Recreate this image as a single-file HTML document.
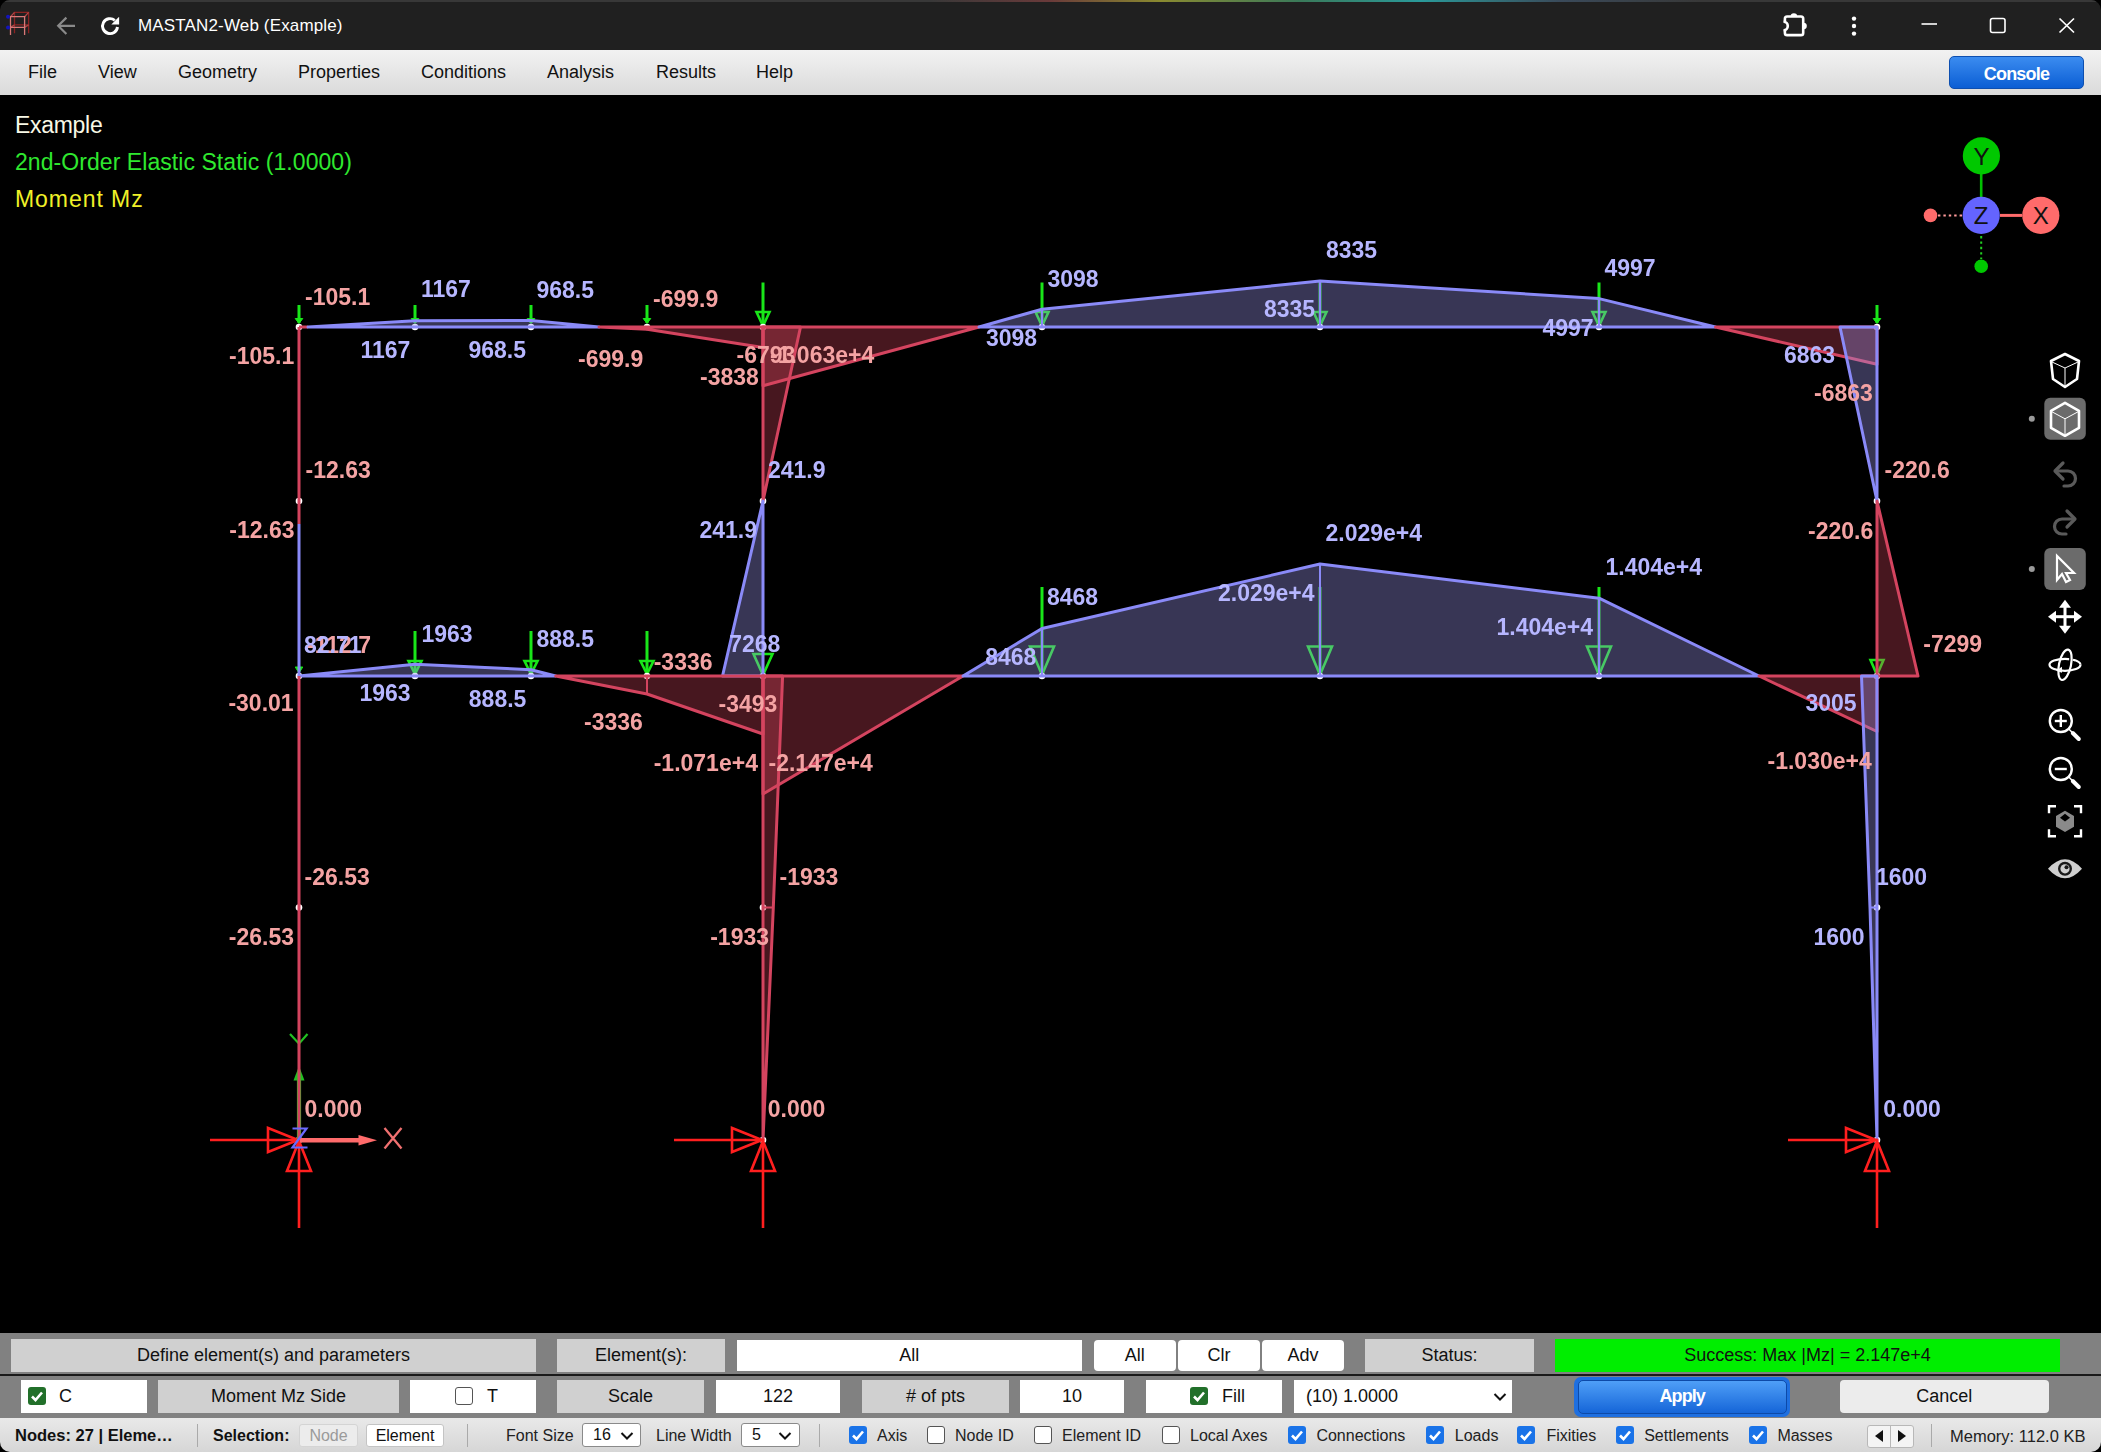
<!DOCTYPE html><html><head><meta charset="utf-8"><style>

*{box-sizing:border-box;margin:0;padding:0}
html,body{width:2101px;height:1452px;overflow:hidden;background:#000;font-family:"Liberation Sans",sans-serif}
.a{position:absolute}
#win{position:absolute;left:0;top:0;width:2101px;height:1452px;background:#000;border-radius:10px;overflow:hidden}
#tb{position:absolute;left:0;top:0;width:2101px;height:50px;background:#202020}
#tb .t{position:absolute;left:138px;top:17px;color:#fff;font-size:18px;line-height:18px;white-space:nowrap}
#mb{position:absolute;left:0;top:50px;width:2101px;height:45px;background:linear-gradient(#f2f2f2,#dadada)}
#mb span{position:absolute;top:13px;font-size:18px;line-height:18px;color:#111}
#console{position:absolute;left:1949px;top:6px;width:135px;height:33px;border-radius:5px;background:linear-gradient(#3b8cf0,#0b5ed4);border:1px solid #0d4fb0;color:#fff;font-size:18px;letter-spacing:-0.8px;font-weight:bold;text-align:center;line-height:34px}
.ov{position:absolute;font-size:23px;line-height:23px;left:15px;white-space:nowrap}
#bp{position:absolute;left:0;top:1333px;width:2101px;height:85px;background:#818181}
#sb{position:absolute;left:0;top:1418px;width:2101px;height:34px;background:linear-gradient(#e9e9e9,#d6d6d6)}
.bx{position:absolute;background:#d0d0d0;font-size:18px;color:#111;text-align:center;white-space:nowrap}
.r1{top:1339px;height:33px;line-height:33px}
.r2{top:1380px;height:33px;line-height:33px}
.wh{background:#fff}
.btn{background:#fff;border-radius:4px;border:1px solid #c8c8c8}
.s{position:absolute;font-size:16px;line-height:16px;color:#222;white-space:nowrap;top:1427px}
.cb{position:absolute;top:1426px;width:18px;height:18px;border-radius:3px}
.cb.on{background:#1a73e8}
.cb.off{background:#fff;border:1.5px solid #555}
.sep{position:absolute;top:1424px;width:1px;height:23px;background:#aaa}
.sel{position:absolute;top:1423px;height:24px;background:#fff;border:1px solid #8a8a8a;border-radius:3px;font-size:16px;line-height:22px;padding-left:10px;color:#111}

</style></head><body><div id="win">
<div id="tb">
<div class="a" style="left:0;top:0;width:2101px;height:2px;background:linear-gradient(90deg,#383838 0px,#383838 930px,#6a3a3a 1050px,#8a8a30 1160px,#3a7a5a 1300px,#2a9a9a 1420px,#3a4a5a 1560px,#383838 1700px,#383838 2101px)"></div>
<svg class="a" style="left:0;top:0" width="200" height="50"><g fill="none" stroke-width="1.3"><path d="M14.5,33.3 L14.5,12.4 L28.6,12.4 L28.6,33.3 M14.5,24.9 L28.6,24.9" stroke="#8a2222"/><path d="M10.5,16.7 L14.5,12.4 M24.6,16.7 L28.6,12.4 M10.5,27.4 L14.5,24.9 M24.6,27.4 L28.6,24.9" stroke="#b04444"/><path d="M10.5,35 L10.5,16.7 L24.6,16.7 L24.6,35 M10.5,27.4 L24.6,27.4" stroke="#d87878"/></g><circle cx="8" cy="16.7" r="2" fill="#1414bb"/><circle cx="8" cy="27.4" r="2" fill="#1414bb"/><g stroke="#8a8a8a" stroke-width="2.2" fill="none" stroke-linecap="butt"><path d="M58,25.8 L75,25.8"/><path d="M66.4,17.6 L58.2,25.8 L66.4,34"/></g><path d="M117.5,27 A7.5,7.5 0 1 1 114.8,20.3" fill="none" stroke="#fff" stroke-width="2.9"/><polygon points="119.1,16.8 119.1,24.6 111.3,24.6" fill="#fff"/></svg>
<span class="t" style="font-size:17px;letter-spacing:0.15px">MASTAN2-Web (Example)</span>
<svg class="a" style="left:1760px;top:0" width="341" height="50"><rect x="24.9" y="16.5" width="18.3" height="18.6" rx="2.2" fill="none" stroke="#fff" stroke-width="2.6"/><path d="M30.6,16.5 A3.3,3.3 0 0 1 37.2,16.5 Z" fill="#fff"/><path d="M43.5,22.8 A3.3,3.3 0 0 1 43.5,29.4 Z" fill="#fff"/><rect x="22" y="22.5" width="4.5" height="7" fill="#202020"/><path d="M23.6,21.8 A4.2,4.2 0 0 1 23.6,30.2" fill="none" stroke="#fff" stroke-width="2.6"/><circle cx="94" cy="18.6" r="2.2" fill="#fff"/><circle cx="94" cy="26" r="2.2" fill="#fff"/><circle cx="94" cy="33.6" r="2.2" fill="#fff"/><line x1="161.5" y1="24" x2="177" y2="24" stroke="#fff" stroke-width="1.6"/><rect x="230.5" y="18.5" width="14.5" height="14" rx="2" fill="none" stroke="#fff" stroke-width="1.6"/><path d="M299.5,18.5 L314,32.5 M314,18.5 L299.5,32.5" stroke="#fff" stroke-width="1.7"/></svg>
</div>
<div id="mb">
<span style="left:28px">File</span>
<span style="left:98px">View</span>
<span style="left:178px">Geometry</span>
<span style="left:298px">Properties</span>
<span style="left:421px">Conditions</span>
<span style="left:547px">Analysis</span>
<span style="left:656px">Results</span>
<span style="left:756px">Help</span>
<div id="console">Console</div>
</div>
<div class="a" style="left:0;top:95px;width:2101px;height:1238px;background:#000"></div>
<svg class="a" style="left:0;top:0;filter:blur(0.45px)" width="2101" height="1452" viewBox="0 0 2101 1452">
<line x1="299" y1="305" x2="299" y2="323" stroke="#19e619" stroke-width="3"/><polygon points="295.2,318.5 302.8,318.5 299,323.5" fill="#19e619" stroke="#19e619" stroke-width="1"/>
<line x1="415" y1="305" x2="415" y2="323" stroke="#19e619" stroke-width="3"/><polygon points="411.2,318.5 418.8,318.5 415,323.5" fill="#19e619" stroke="#19e619" stroke-width="1"/>
<line x1="531" y1="305" x2="531" y2="323" stroke="#19e619" stroke-width="3"/><polygon points="527.2,318.5 534.8,318.5 531,323.5" fill="#19e619" stroke="#19e619" stroke-width="1"/>
<line x1="647" y1="305" x2="647" y2="323" stroke="#19e619" stroke-width="3"/><polygon points="643.2,318.5 650.8,318.5 647,323.5" fill="#19e619" stroke="#19e619" stroke-width="1"/>
<line x1="1877" y1="305" x2="1877" y2="323" stroke="#19e619" stroke-width="3"/><polygon points="1873.2,318.5 1880.8,318.5 1877,323.5" fill="#19e619" stroke="#19e619" stroke-width="1"/>
<line x1="763" y1="282.5" x2="763" y2="326" stroke="#19e619" stroke-width="3"/><polygon points="756.5,312 769.5,312 763,326" fill="none" stroke="#19e619" stroke-width="2.6" stroke-linejoin="miter"/>
<line x1="1042" y1="282.5" x2="1042" y2="326" stroke="#19e619" stroke-width="3"/><polygon points="1035.5,312 1048.5,312 1042,326" fill="none" stroke="#19e619" stroke-width="2.6" stroke-linejoin="miter"/>
<line x1="1320" y1="282.5" x2="1320" y2="326" stroke="#19e619" stroke-width="3"/><polygon points="1313.5,312 1326.5,312 1320,326" fill="none" stroke="#19e619" stroke-width="2.6" stroke-linejoin="miter"/>
<line x1="1599" y1="282.5" x2="1599" y2="326" stroke="#19e619" stroke-width="3"/><polygon points="1592.5,312 1605.5,312 1599,326" fill="none" stroke="#19e619" stroke-width="2.6" stroke-linejoin="miter"/>
<polygon points="295.2,667 302.8,667 299,673" fill="#19e619" stroke="#19e619" stroke-width="1"/>
<line x1="415" y1="631" x2="415" y2="674" stroke="#19e619" stroke-width="3"/><polygon points="408.5,661 421.5,661 415,674" fill="none" stroke="#19e619" stroke-width="2.6" stroke-linejoin="miter"/>
<line x1="531" y1="631" x2="531" y2="674" stroke="#19e619" stroke-width="3"/><polygon points="524.5,661 537.5,661 531,674" fill="none" stroke="#19e619" stroke-width="2.6" stroke-linejoin="miter"/>
<line x1="647" y1="631" x2="647" y2="674" stroke="#19e619" stroke-width="3"/><polygon points="640.5,661 653.5,661 647,674" fill="none" stroke="#19e619" stroke-width="2.6" stroke-linejoin="miter"/>
<polygon points="753.5,654 772.5,654 763,675" fill="none" stroke="#19e619" stroke-width="2.6" stroke-linejoin="miter"/>
<line x1="1042" y1="587" x2="1042" y2="675" stroke="#19e619" stroke-width="3"/><polygon points="1030,646.5 1054,646.5 1042,675" fill="none" stroke="#19e619" stroke-width="2.6" stroke-linejoin="miter"/>
<line x1="1320" y1="587" x2="1320" y2="675" stroke="#19e619" stroke-width="3"/><polygon points="1308,646.5 1332,646.5 1320,675" fill="none" stroke="#19e619" stroke-width="2.6" stroke-linejoin="miter"/>
<line x1="1599" y1="587" x2="1599" y2="675" stroke="#19e619" stroke-width="3"/><polygon points="1587,646.5 1611,646.5 1599,675" fill="none" stroke="#19e619" stroke-width="2.6" stroke-linejoin="miter"/>
<polygon points="1870.5,660 1883.5,660 1877,675" fill="none" stroke="#19e619" stroke-width="2.6" stroke-linejoin="miter"/>
<circle cx="299" cy="327" r="3.3" fill="#fff"/>
<circle cx="299" cy="676" r="3.3" fill="#fff"/>
<circle cx="415" cy="327" r="3.3" fill="#fff"/>
<circle cx="415" cy="676" r="3.3" fill="#fff"/>
<circle cx="531" cy="327" r="3.3" fill="#fff"/>
<circle cx="531" cy="676" r="3.3" fill="#fff"/>
<circle cx="647" cy="327" r="3.3" fill="#fff"/>
<circle cx="647" cy="676" r="3.3" fill="#fff"/>
<circle cx="763" cy="327" r="3.3" fill="#fff"/>
<circle cx="763" cy="676" r="3.3" fill="#fff"/>
<circle cx="1042" cy="327" r="3.3" fill="#fff"/>
<circle cx="1042" cy="676" r="3.3" fill="#fff"/>
<circle cx="1320" cy="327" r="3.3" fill="#fff"/>
<circle cx="1320" cy="676" r="3.3" fill="#fff"/>
<circle cx="1599" cy="327" r="3.3" fill="#fff"/>
<circle cx="1599" cy="676" r="3.3" fill="#fff"/>
<circle cx="1877" cy="327" r="3.3" fill="#fff"/>
<circle cx="1877" cy="676" r="3.3" fill="#fff"/>
<circle cx="299" cy="501" r="3.3" fill="#fff"/>
<circle cx="299" cy="907.5" r="3.3" fill="#fff"/>
<circle cx="299" cy="1140" r="3.3" fill="#fff"/>
<circle cx="763" cy="501" r="3.3" fill="#fff"/>
<circle cx="763" cy="907.5" r="3.3" fill="#fff"/>
<circle cx="763" cy="1140" r="3.3" fill="#fff"/>
<circle cx="1877" cy="501" r="3.3" fill="#fff"/>
<circle cx="1877" cy="907.5" r="3.3" fill="#fff"/>
<circle cx="1877" cy="1140" r="3.3" fill="#fff"/>
<line x1="299" y1="327" x2="308" y2="327" stroke="#d4445f" stroke-width="3"/>
<polygon points="308,327 415,320.8 531,320.5 599,327" fill="rgba(155,150,235,0.36)" stroke="#8a8af8" stroke-width="3" stroke-linejoin="round"/>
<polygon points="599,327 647,329.2 763,347.6 763,327" fill="rgba(216,70,95,0.33)" stroke="#d4445f" stroke-width="3" stroke-linejoin="round"/>
<polygon points="763,327 763,385.7 979,327" fill="rgba(216,70,95,0.33)" stroke="#d4445f" stroke-width="3" stroke-linejoin="round"/>
<polygon points="763,327 800.5,327 763,501" fill="rgba(216,70,95,0.33)" stroke="#d4445f" stroke-width="3" stroke-linejoin="round"/>
<polygon points="979,327 1042,309.2 1320,281 1599,298.6 1715.5,327" fill="rgba(155,150,235,0.36)" stroke="#8a8af8" stroke-width="3" stroke-linejoin="round"/>
<line x1="1042" y1="309.2" x2="1042" y2="327" stroke="#8a8af8" stroke-width="2"/>
<line x1="1320" y1="281" x2="1320" y2="327" stroke="#8a8af8" stroke-width="2"/>
<line x1="1599" y1="298.6" x2="1599" y2="327" stroke="#8a8af8" stroke-width="2"/>
<polygon points="1715.5,327 1877,364.3 1877,327" fill="rgba(216,70,95,0.33)" stroke="#d4445f" stroke-width="3" stroke-linejoin="round"/>
<polygon points="1840,327 1877,501 1877,327" fill="rgba(155,150,235,0.36)" stroke="#8a8af8" stroke-width="3" stroke-linejoin="round"/>
<polygon points="763,501 722.5,676 763,676" fill="rgba(155,150,235,0.36)" stroke="#8a8af8" stroke-width="3" stroke-linejoin="round"/>
<polygon points="1877,501 1918,676 1877,676" fill="rgba(216,70,95,0.33)" stroke="#d4445f" stroke-width="3" stroke-linejoin="round"/>
<polygon points="299,676 415,664.3 531,669.7 555.7,676" fill="rgba(155,150,235,0.36)" stroke="#8a8af8" stroke-width="3" stroke-linejoin="round"/>
<polygon points="555.7,676 647,694 763,734 763,676" fill="rgba(216,70,95,0.33)" stroke="#d4445f" stroke-width="3" stroke-linejoin="round"/>
<line x1="647" y1="676" x2="647" y2="694" stroke="#d4445f" stroke-width="2"/>
<polygon points="763,676 763,794 963,676" fill="rgba(216,70,95,0.33)" stroke="#d4445f" stroke-width="3" stroke-linejoin="round"/>
<polygon points="963,676 1042,628.5 1320,564 1599,598.2 1759,676" fill="rgba(155,150,235,0.36)" stroke="#8a8af8" stroke-width="3" stroke-linejoin="round"/>
<line x1="1042" y1="628.5" x2="1042" y2="676" stroke="#8a8af8" stroke-width="2"/>
<line x1="1320" y1="564" x2="1320" y2="676" stroke="#8a8af8" stroke-width="2"/>
<line x1="1599" y1="598.2" x2="1599" y2="676" stroke="#8a8af8" stroke-width="2"/>
<polygon points="1759,676 1877,731.5 1877,676" fill="rgba(216,70,95,0.33)" stroke="#d4445f" stroke-width="3" stroke-linejoin="round"/>
<polygon points="782.6,676 773.3,907.5 763,1140 763,676" fill="rgba(216,70,95,0.33)" stroke="#d4445f" stroke-width="3" stroke-linejoin="round"/>
<line x1="763" y1="907.5" x2="773.3" y2="907.5" stroke="#d4445f" stroke-width="2"/>
<polygon points="1861.5,676 1870,907.5 1877,1140 1877,676" fill="rgba(155,150,235,0.36)" stroke="#8a8af8" stroke-width="3" stroke-linejoin="round"/>
<line x1="1870" y1="907.5" x2="1877" y2="907.5" stroke="#8a8af8" stroke-width="2"/>
<line x1="210" y1="1140" x2="297" y2="1140" stroke="#ff1f1f" stroke-width="2.6"/><polygon points="268,1128 268,1152 298,1140" fill="none" stroke="#ff1f1f" stroke-width="2.6"/><line x1="299" y1="1228" x2="299" y2="1142" stroke="#ff1f1f" stroke-width="2.6"/><polygon points="287,1171 311,1171 299,1141" fill="none" stroke="#ff1f1f" stroke-width="2.6"/>
<line x1="674" y1="1140" x2="761" y2="1140" stroke="#ff1f1f" stroke-width="2.6"/><polygon points="732,1128 732,1152 762,1140" fill="none" stroke="#ff1f1f" stroke-width="2.6"/><line x1="763" y1="1228" x2="763" y2="1142" stroke="#ff1f1f" stroke-width="2.6"/><polygon points="751,1171 775,1171 763,1141" fill="none" stroke="#ff1f1f" stroke-width="2.6"/>
<line x1="1788" y1="1140" x2="1875" y2="1140" stroke="#ff1f1f" stroke-width="2.6"/><polygon points="1846,1128 1846,1152 1876,1140" fill="none" stroke="#ff1f1f" stroke-width="2.6"/><line x1="1877" y1="1228" x2="1877" y2="1142" stroke="#ff1f1f" stroke-width="2.6"/><polygon points="1865,1171 1889,1171 1877,1141" fill="none" stroke="#ff1f1f" stroke-width="2.6"/>
<line x1="299" y1="1140" x2="299" y2="1075" stroke="#22c022" stroke-width="4.2"/>
<polygon points="293.5,1080.5 304.5,1080.5 299,1066" fill="#22c022"/>
<path d="M290,1034 L299,1043.7 L307.5,1034 M299,1043.7 L299,1050" fill="none" stroke="#22c022" stroke-width="2.2"/>
<line x1="299" y1="327" x2="299" y2="524" stroke="#d4445f" stroke-width="3"/>
<line x1="299" y1="524" x2="299" y2="676" stroke="#8a8af8" stroke-width="3"/>
<line x1="299" y1="676" x2="299" y2="1140" stroke="#d4445f" stroke-width="3"/>
<line x1="300" y1="1140.3" x2="361" y2="1140.3" stroke="#ff6b6b" stroke-width="4.4"/>
<polygon points="358.5,1135 377,1140.3 358.5,1145.6" fill="#ff6b6b"/>
<path d="M384.5,1128 L401.5,1148.5 M401.5,1128 L384.5,1148.5" fill="none" stroke="#f07070" stroke-width="2.3"/>
<path d="M292.5,1128.5 L306.5,1128.5 L292.5,1147.5 L307.5,1147.5" fill="none" stroke="#6a6aff" stroke-width="2.2"/>
<g font-family="Liberation Sans" font-weight="bold" font-size="23">
<text transform="translate(305,304.5)" fill="#f4a3a3">-105.1</text>
<text transform="translate(421,297.1)" fill="#b6b6ff">1167</text>
<text transform="translate(536.5,298.3)" fill="#b6b6ff">968.5</text>
<text transform="translate(653,307.2)" fill="#f4a3a3">-699.9</text>
<text transform="translate(229,363.9)" fill="#f4a3a3">-105.1</text>
<text transform="translate(360.5,357.5)" fill="#b6b6ff">1167</text>
<text transform="translate(468.5,358.3)" fill="#b6b6ff">968.5</text>
<text transform="translate(578,367.0)" fill="#f4a3a3">-699.9</text>
<text transform="translate(736.5,362.5)" fill="#f4a3a3">-6793</text>
<text transform="translate(770,362.5)" fill="#f4a3a3">-1.063e+4</text>
<text transform="translate(700,384.8)" fill="#f4a3a3">-3838</text>
<text transform="translate(1047.5,286.5)" fill="#b6b6ff">3098</text>
<text transform="translate(986,346.1)" fill="#b6b6ff">3098</text>
<text transform="translate(1326,257.7)" fill="#b6b6ff">8335</text>
<text transform="translate(1264,317.2)" fill="#b6b6ff">8335</text>
<text transform="translate(1604.5,276.2)" fill="#b6b6ff">4997</text>
<text transform="translate(1542.5,336.2)" fill="#b6b6ff">4997</text>
<text transform="translate(1784,363.4)" fill="#b6b6ff">6863</text>
<text transform="translate(1814,401.4)" fill="#f4a3a3">-6863</text>
<text transform="translate(1884.5,477.5)" fill="#f4a3a3">-220.6</text>
<text transform="translate(305.5,478.1)" fill="#f4a3a3">-12.63</text>
<text transform="translate(229.3,537.5)" fill="#f4a3a3">-12.63</text>
<text transform="translate(768,477.5)" fill="#b6b6ff">241.9</text>
<text transform="translate(699.5,537.5)" fill="#b6b6ff">241.9</text>
<text transform="translate(1808,538.5)" fill="#f4a3a3">-220.6</text>
<text transform="translate(1325.5,540.5)" fill="#b6b6ff">2.029e+4</text>
<text transform="translate(1605.5,575.1)" fill="#b6b6ff">1.404e+4</text>
<text transform="translate(1047,605.2)" fill="#b6b6ff">8468</text>
<text transform="translate(1218,600.5)" fill="#b6b6ff">2.029e+4</text>
<text transform="translate(1496.5,635.3)" fill="#b6b6ff">1.404e+4</text>
<text transform="translate(985.2,665.2)" fill="#b6b6ff">8468</text>
<text transform="translate(421.5,641.5)" fill="#b6b6ff">1963</text>
<text transform="translate(536.5,647.4)" fill="#b6b6ff">888.5</text>
<text transform="translate(307,652.9)" fill="#f4a3a3">-112.7</text>
<text transform="translate(304,652.9)" fill="#b6b6ff">82.71</text>
<text transform="translate(653.7,670.0)" fill="#f4a3a3">-3336</text>
<text transform="translate(729.2,651.5)" fill="#b6b6ff">7268</text>
<text transform="translate(1923.3,652.3)" fill="#f4a3a3">-7299</text>
<text transform="translate(228.4,711.2)" fill="#f4a3a3">-30.01</text>
<text transform="translate(359.5,701.2)" fill="#b6b6ff">1963</text>
<text transform="translate(468.8,706.9)" fill="#b6b6ff">888.5</text>
<text transform="translate(584,730.2)" fill="#f4a3a3">-3336</text>
<text transform="translate(718.5,711.8)" fill="#f4a3a3">-3493</text>
<text transform="translate(1805.5,711.2)" fill="#b6b6ff">3005</text>
<text transform="translate(653.7,770.5)" fill="#f4a3a3">-1.071e+4</text>
<text transform="translate(768.5,770.5)" fill="#f4a3a3">-2.147e+4</text>
<text transform="translate(1767.5,768.8)" fill="#f4a3a3">-1.030e+4</text>
<text transform="translate(304.5,884.8)" fill="#f4a3a3">-26.53</text>
<text transform="translate(228.8,944.8)" fill="#f4a3a3">-26.53</text>
<text transform="translate(779.5,884.8)" fill="#f4a3a3">-1933</text>
<text transform="translate(710.2,944.8)" fill="#f4a3a3">-1933</text>
<text transform="translate(1876,884.7)" fill="#b6b6ff">1600</text>
<text transform="translate(1813.5,944.5)" fill="#b6b6ff">1600</text>
<text transform="translate(304.5,1117.2)" fill="#f4a3a3">0.000</text>
<text transform="translate(767.8,1117.2)" fill="#f4a3a3">0.000</text>
<text transform="translate(1883.3,1117.1)" fill="#b6b6ff">0.000</text>
</g>
</svg>
<div class="ov" style="top:114px;color:#f8f8e6;letter-spacing:-0.3px">Example</div><div class="ov" style="top:151px;color:#2fe82f;letter-spacing:0.06px">2nd-Order Elastic Static (1.0000)</div><div class="ov" style="top:188px;color:#f0f028;letter-spacing:0.95px">Moment Mz</div>
<svg class="a" style="left:1900px;top:120px" width="180" height="170"><line x1="81.2" y1="36" x2="81.2" y2="95" stroke="#00c000" stroke-width="2.6"/><line x1="100" y1="95.4" x2="122" y2="95.4" stroke="#ff6b6b" stroke-width="3"/><line x1="38" y1="95.4" x2="62" y2="95.4" stroke="#ff9a9a" stroke-width="2" stroke-dasharray="2.4,3"/><line x1="81.2" y1="116" x2="81.2" y2="139" stroke="#22d022" stroke-width="2" stroke-dasharray="2.4,3"/><circle cx="81.4" cy="35.9" r="18.6" fill="#00c800"/><circle cx="81.2" cy="95.4" r="18.6" fill="#6464ff"/><circle cx="140.8" cy="95.4" r="18.6" fill="#ff6b6b"/><circle cx="30.5" cy="95.4" r="6.8" fill="#ff6b6b"/><circle cx="81.2" cy="146.2" r="6.8" fill="#00c800"/><g font-family="Liberation Sans" font-size="24" fill="#111" text-anchor="middle"><text x="81.4" y="44.5">Y</text><text x="81.2" y="104">Z</text><text x="140.8" y="104">X</text></g></svg>
<svg class="a" style="left:2020px;top:340px" width="81" height="560">
<g fill="none" stroke="#ffffff" stroke-linejoin="round"><polygon points="45,14 59,21 57,39 45,47 33,39 31,21" stroke-width="2.6"/><path d="M32,22 L45,28 L58,22 M45,28 L45,46" stroke-width="1"/></g>
<rect x="24.299999999999955" y="57.80000000000001" width="41.5" height="42" rx="6" fill="#6b6b6b"/>
<circle cx="11.799999999999955" cy="78.69999999999999" r="3" fill="#9a9a9a"/>
<g fill="none" stroke="#ffffff" stroke-linejoin="round"><polygon points="45,62.80000000000001 59,70.80000000000001 59,87.80000000000001 45,95.80000000000001 31,87.80000000000001 31,70.80000000000001" stroke-width="2.6"/><path d="M32,71.80000000000001 L45,78.80000000000001 L58,71.80000000000001 M45,78.80000000000001 L45,94.80000000000001" stroke-width="1"/></g>
<g fill="none" stroke="#5a5a5a" stroke-width="3.2" stroke-linecap="round" stroke-linejoin="round"><path d="M36,131 L48,131 A7.5,7.5 0 0 1 48,146 L44,146"/><path d="M43,123 L35,131 L43,139"/></g>
<g fill="none" stroke="#5a5a5a" stroke-width="3.2" stroke-linecap="round" stroke-linejoin="round"><path d="M54,179 L42,179 A7.5,7.5 0 0 0 42,194 L46,194"/><path d="M47,171 L55,179 L47,187"/></g>
<rect x="24.299999999999955" y="207.89999999999998" width="41.5" height="42" rx="6" fill="#6b6b6b"/>
<circle cx="11.799999999999955" cy="229" r="3" fill="#9a9a9a"/>
<path d="M37,216 L37,240 L42,234 L46,242 L50,240 L46,233 L54,233 Z" fill="none" stroke="#ffffff" stroke-width="2.2" stroke-linejoin="miter"/>
<g fill="#ffffff"><rect x="43.5" y="266.70000000000005" width="3" height="20"/><rect x="35" y="275.20000000000005" width="20" height="3"/><polygon points="45,259.70000000000005 39,267.70000000000005 51,267.70000000000005"/><polygon points="45,293.70000000000005 39,285.70000000000005 51,285.70000000000005"/><polygon points="28,276.70000000000005 36,270.70000000000005 36,282.70000000000005"/><polygon points="62,276.70000000000005 54,270.70000000000005 54,282.70000000000005"/></g>
<ellipse cx="45" cy="324.79999999999995" rx="15.5" ry="6" fill="none" stroke="#ffffff" stroke-width="2.2"/><ellipse cx="45" cy="324.79999999999995" rx="6" ry="15.5" transform="rotate(12 45 324.79999999999995)" fill="none" stroke="#000" stroke-width="5" stroke-dasharray="20 100" stroke-dashoffset="-58"/><ellipse cx="45" cy="324.79999999999995" rx="6" ry="15.5" transform="rotate(12 45 324.79999999999995)" fill="none" stroke="#ffffff" stroke-width="2.2" stroke-dasharray="72 6"/><path d="M55,320.29999999999995 A15.5,6 0 0 1 60.5,324.79999999999995" fill="none" stroke="#000" stroke-width="5"/><path d="M53,319.79999999999995 A15.5,6 0 0 1 60.5,324.79999999999995" fill="none" stroke="#ffffff" stroke-width="2.2"/><polygon points="36,330.79999999999995 42,326.79999999999995 42,332.79999999999995" fill="#ffffff"/>
<circle cx="40.80000000000018" cy="381" r="11" fill="none" stroke="#ffffff" stroke-width="2.4"/><line x1="48.80000000000018" y1="389" x2="51.80000000000018" y2="392" stroke="#ffffff" stroke-width="1.5"/><line x1="52.80000000000018" y1="393" x2="58.80000000000018" y2="399" stroke="#ffffff" stroke-width="4" stroke-linecap="round"/><line x1="34.80000000000018" y1="381" x2="46.80000000000018" y2="381" stroke="#ffffff" stroke-width="2.4"/>
<line x1="40.80000000000018" y1="375" x2="40.80000000000018" y2="387" stroke="#ffffff" stroke-width="2.4"/>
<circle cx="40.80000000000018" cy="429" r="11" fill="none" stroke="#ffffff" stroke-width="2.4"/><line x1="48.80000000000018" y1="437" x2="51.80000000000018" y2="440" stroke="#ffffff" stroke-width="1.5"/><line x1="52.80000000000018" y1="441" x2="58.80000000000018" y2="447" stroke="#ffffff" stroke-width="4" stroke-linecap="round"/><line x1="34.80000000000018" y1="429" x2="46.80000000000018" y2="429" stroke="#ffffff" stroke-width="2.4"/>
<g fill="none" stroke="#ffffff" stroke-width="2.4"><path d="M29,473.29999999999995 L29,466.29999999999995 L36,466.29999999999995"/><path d="M54,466.29999999999995 L61,466.29999999999995 L61,473.29999999999995"/><path d="M29,489.29999999999995 L29,496.29999999999995 L36,496.29999999999995"/><path d="M54,496.29999999999995 L61,496.29999999999995 L61,489.29999999999995"/></g><polygon points="45,470.79999999999995 54,476.09999999999997 54,486.79999999999995 45,491.99999999999994 36,486.79999999999995 36,476.09999999999997" fill="#8a8a8a"/><polygon points="45,473.79999999999995 50,477.69999999999993 45,481.59999999999997 40,477.69999999999993" fill="#000"/>
<path d="M28,528.8 Q45,509.79999999999995 62,528.8 Q45,547.8 28,528.8 Z" fill="#cfcfcf"/><circle cx="45" cy="528.8" r="7" fill="#1a1a1a"/><circle cx="45" cy="528.8" r="4.6" fill="#cfcfcf"/><circle cx="46.5" cy="527.3" r="2" fill="#1a1a1a"/>
</svg>
<div id="bp"></div>
<div class="a" style="left:0;top:1374px;width:2101px;height:2px;background:#1a1a1a"></div>
<div class="bx r1" style="left:11px;width:525px;">Define element(s) and parameters</div>
<div class="bx r1" style="left:557px;width:168px;">Element(s):</div>
<div class="bx r1 wh" style="left:736.5px;width:345.5px;top:1340px;height:31px;line-height:31px">All</div>
<div class="bx r1 wh" style="left:1094px;width:81.5px;top:1340px;height:31px;line-height:31px;border-radius:4px">All</div>
<div class="bx r1 wh" style="left:1178px;width:82px;top:1340px;height:31px;line-height:31px;border-radius:4px">Clr</div>
<div class="bx r1 wh" style="left:1262px;width:82px;top:1340px;height:31px;line-height:31px;border-radius:4px">Adv</div>
<div class="bx r1" style="left:1365px;width:169px;">Status:</div>
<div class="bx r1" style="left:1555px;width:505px;background:#00ee00;color:#111">Success: Max |Mz| = 2.147e+4</div>
<div class="bx r2 wh" style="left:20.7px;width:125.99999999999999px;"></div>
<div class="a" style="left:28px;top:1387px;width:18px;height:18px;background:#22702a;border-radius:3px"><svg width="18" height="18" style="position:absolute;left:0;top:0"><path d="M4,9.5 L7.5,13 L14,5.5" fill="none" stroke="#fff" stroke-width="2.6"/></svg></div>
<div class="a" style="left:59px;top:1384px;font-size:18px;line-height:25px;color:#111">C</div>
<div class="bx r2" style="left:158px;width:241px;">Moment Mz Side</div>
<div class="bx r2 wh" style="left:410px;width:126px;"></div>
<div class="a" style="left:455px;top:1387px;width:18px;height:18px;background:#fff;border:1.5px solid #555;border-radius:3px"></div>
<div class="a" style="left:487px;top:1384px;font-size:18px;line-height:25px;color:#111">T</div>
<div class="bx r2" style="left:557px;width:147px;">Scale</div>
<div class="bx r2 wh" style="left:716px;width:124px;">122</div>
<div class="bx r2" style="left:862px;width:147px;"># of pts</div>
<div class="bx r2 wh" style="left:1020px;width:104px;">10</div>
<div class="bx r2 wh" style="left:1145.5px;width:136.0px;"></div>
<div class="a" style="left:1190px;top:1387px;width:18px;height:18px;background:#22702a;border-radius:3px"><svg width="18" height="18" style="position:absolute;left:0;top:0"><path d="M4,9.5 L7.5,13 L14,5.5" fill="none" stroke="#fff" stroke-width="2.6"/></svg></div>
<div class="a" style="left:1222px;top:1384px;font-size:18px;line-height:25px;color:#111">Fill</div>
<div class="bx r2 wh" style="left:1293.5px;width:218.5px;"></div>
<div class="a" style="left:1306px;top:1384px;font-size:18px;line-height:25px;color:#111">(10) 1.0000</div>
<svg class="a" style="left:1493px;top:1392px" width="14" height="10"><path d="M1.5,2 L7,7.5 L12.5,2" fill="none" stroke="#111" stroke-width="2"/></svg>
<div class="a" style="left:1574px;top:1376.5px;width:216px;height:40.5px;border-radius:7px;background:#1e6fe0"></div>
<div class="a" style="left:1578px;top:1380px;width:208.5px;height:33.5px;border-radius:5px;background:linear-gradient(#4f9ff7,#1565d8);border:1px solid #0d4aa8;color:#fff;font-size:18px;letter-spacing:-0.9px;font-weight:bold;text-align:center;line-height:31px">Apply</div>
<div class="a" style="left:1840px;top:1380px;width:208.5px;height:33px;border-radius:4px;background:#ececec;color:#111;font-size:18px;text-align:center;line-height:33px">Cancel</div>
<div id="sb"></div>
<div class="s" style="left:15px;top:1427px;font-weight:bold;color:#111;font-size:16.5px;line-height:16.5px">Nodes: 27 | Eleme…</div>
<div class="sep" style="left:197px"></div>
<div class="s" style="left:213px;top:1427.5px;font-weight:bold;color:#111">Selection:</div>
<div class="a" style="left:299px;top:1424px;width:59px;height:23px;background:#ececec;border:1px solid #d4d4d4;border-radius:3px;font-size:16px;line-height:21px;text-align:center;color:#9a9a9a">Node</div>
<div class="a" style="left:366px;top:1424px;width:78px;height:23px;background:#fff;border:1px solid #c4c4c4;border-radius:3px;font-size:16px;line-height:21px;text-align:center;color:#111">Element</div>
<div class="sep" style="left:467px"></div>
<div class="s" style="left:506px;top:1428px">Font Size</div>
<div class="sel" style="left:582px;width:59px">16</div>
<svg class="a" style="left:620px;top:1431px" width="14" height="10"><path d="M1.5,2 L7,7.5 L12.5,2" fill="none" stroke="#111" stroke-width="2"/></svg>
<div class="s" style="left:656px;top:1428px">Line Width</div>
<div class="sel" style="left:741px;width:58.5px">5</div>
<svg class="a" style="left:778px;top:1431px" width="14" height="10"><path d="M1.5,2 L7,7.5 L12.5,2" fill="none" stroke="#111" stroke-width="2"/></svg>
<div class="sep" style="left:819px"></div>
<div class="cb on" style="left:849px"><svg width="18" height="18" style="position:absolute;left:0;top:0"><path d="M4,9.5 L7.5,13 L14,5.5" fill="none" stroke="#fff" stroke-width="2.6"/></svg></div>
<div class="s" style="left:877px;top:1428px">Axis</div>
<div class="cb off" style="left:926.7px"></div>
<div class="s" style="left:955px;top:1428px">Node ID</div>
<div class="cb off" style="left:1034px"></div>
<div class="s" style="left:1062px;top:1428px">Element ID</div>
<div class="cb off" style="left:1162px"></div>
<div class="s" style="left:1190px;top:1428px">Local Axes</div>
<div class="cb on" style="left:1287.6px"><svg width="18" height="18" style="position:absolute;left:0;top:0"><path d="M4,9.5 L7.5,13 L14,5.5" fill="none" stroke="#fff" stroke-width="2.6"/></svg></div>
<div class="s" style="left:1316.4px;top:1428px">Connections</div>
<div class="cb on" style="left:1425.6px"><svg width="18" height="18" style="position:absolute;left:0;top:0"><path d="M4,9.5 L7.5,13 L14,5.5" fill="none" stroke="#fff" stroke-width="2.6"/></svg></div>
<div class="s" style="left:1454.8px;top:1428px">Loads</div>
<div class="cb on" style="left:1517.3px"><svg width="18" height="18" style="position:absolute;left:0;top:0"><path d="M4,9.5 L7.5,13 L14,5.5" fill="none" stroke="#fff" stroke-width="2.6"/></svg></div>
<div class="s" style="left:1546.4px;top:1428px">Fixities</div>
<div class="cb on" style="left:1615.8px"><svg width="18" height="18" style="position:absolute;left:0;top:0"><path d="M4,9.5 L7.5,13 L14,5.5" fill="none" stroke="#fff" stroke-width="2.6"/></svg></div>
<div class="s" style="left:1644.2px;top:1428px">Settlements</div>
<div class="cb on" style="left:1749px"><svg width="18" height="18" style="position:absolute;left:0;top:0"><path d="M4,9.5 L7.5,13 L14,5.5" fill="none" stroke="#fff" stroke-width="2.6"/></svg></div>
<div class="s" style="left:1777.4px;top:1428px">Masses</div>
<div class="a" style="left:1867px;top:1424.5px;width:47px;height:23px;background:#f4f4f4;border:1px solid #b8b8b8;border-radius:3px"></div>
<div class="a" style="left:1890px;top:1425px;width:1px;height:22px;background:#b8b8b8"></div>
<svg class="a" style="left:1867px;top:1424px" width="47" height="24"><polygon points="16,6 16,18 8,12" fill="#111"/><polygon points="31,6 31,18 39,12" fill="#111"/></svg>
<div class="sep" style="left:1931px"></div>
<div class="s" style="left:1950px;top:1428px;font-size:16.5px;line-height:16.5px">Memory: 112.0 KB</div>
</div></body></html>
